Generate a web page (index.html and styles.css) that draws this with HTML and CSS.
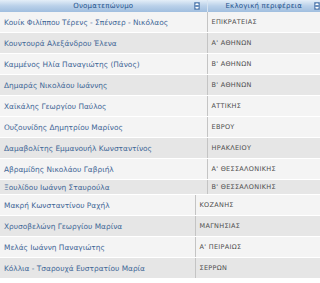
FILE: index.html
```html
<!DOCTYPE html>
<html>
<head>
<meta charset="utf-8">
<link rel="stylesheet" href="styles.css">
</head>
<body>
<table class="grid grid-a">
  <colgroup><col class="c1a"><col></colgroup>
  <thead>
    <tr>
      <th><span class="hd">Ονοματεπώνυμο</span><span class="sort"></span></th>
      <th><span class="hd">Εκλογική περιφέρεια</span><span class="sort"></span></th>
    </tr>
  </thead>
  <tbody>
    <tr class="odd"><td class="nm">Κουίκ Φιλίππου Τέρενς - Σπένσερ - Νικόλαος</td><td class="rg">ΕΠΙΚΡΑΤΕΙΑΣ</td></tr>
    <tr class="even"><td class="nm">Κουντουρά Αλεξάνδρου Έλενα</td><td class="rg">Α' ΑΘΗΝΩΝ</td></tr>
    <tr class="odd"><td class="nm">Καμμένος Ηλία Παναγιώτης (Πάνος)</td><td class="rg">Β' ΑΘΗΝΩΝ</td></tr>
    <tr class="even"><td class="nm">Δημαράς Νικολάου Ιωάννης</td><td class="rg">Β' ΑΘΗΝΩΝ</td></tr>
    <tr class="odd"><td class="nm">Χαϊκάλης Γεωργίου Παύλος</td><td class="rg">ΑΤΤΙΚΗΣ</td></tr>
    <tr class="odd"><td class="nm">Ουζουνίδης Δημητρίου Μαρίνος</td><td class="rg">ΕΒΡΟΥ</td></tr>
    <tr class="even"><td class="nm">Δαμαβολίτης Εμμανουήλ Κωνσταντίνος</td><td class="rg">ΗΡΑΚΛΕΙΟΥ</td></tr>
    <tr class="odd"><td class="nm">Αβραμίδης Νικολάου Γαβριήλ</td><td class="rg">Α' ΘΕΣΣΑΛΟΝΙΚΗΣ</td></tr>
    <tr class="even short"><td class="nm">Ξουλίδου Ιωάννη Σταυρούλα</td><td class="rg">Β' ΘΕΣΣΑΛΟΝΙΚΗΣ</td></tr>
  </tbody>
</table>
<table class="grid grid-b">
  <colgroup><col class="c1b"><col></colgroup>
  <tbody>
    <tr class="odd"><td class="nm">Μακρή Κωνσταντίνου Ραχήλ</td><td class="rg">ΚΟΖΑΝΗΣ</td></tr>
    <tr class="even"><td class="nm">Χρυσοβελώνη Γεωργίου Μαρίνα</td><td class="rg">ΜΑΓΝΗΣΙΑΣ</td></tr>
    <tr class="odd"><td class="nm">Μελάς Ιωάννη Παναγιώτης</td><td class="rg">Α' ΠΕΙΡΑΙΩΣ</td></tr>
    <tr class="even"><td class="nm">Κόλλια - Τσαρουχά Ευστρατίου Μαρία</td><td class="rg">ΣΕΡΡΩΝ</td></tr>
  </tbody>
</table>
</body>
</html>
```

FILE: styles.css
```css
html, body {
  margin: 0;
  padding: 0;
  background: #ffffff;
}
body {
  width: 320px;
  height: 283px;
  overflow: hidden;
  font-family: "DejaVu Sans", Verdana, sans-serif;
  font-size: 7.4px;
}
.grid {
  width: 320px;
  border-collapse: collapse;
  table-layout: fixed;
}
.c1a { width: 207px; }
.c1b { width: 195px; }
th {
  height: 12px;
  padding: 0;
  position: relative;
  font-weight: normal;
  color: #24538e;
  background: linear-gradient(#e4eef8, #b9d0e9 50%, #a0bedf);
  border-right: 1px solid #d6e3f1;
  text-align: center;
  line-height: 12px;
  font-size: 7px;
}
th:last-child { border-right: none; }
.hd { letter-spacing: 0.2px; }
.sort {
  position: absolute;
  right: 7px;
  top: 2px;
  width: 6px;
  height: 8px;
  border-radius: 1px;
  background: #6b8fbb;
}
th:last-child .sort { right: 0; }
.sort::before, .sort::after {
  content: "";
  position: absolute;
  left: 1px;
  border-left: 2px solid transparent;
  border-right: 2px solid transparent;
}
.sort::before { top: 1px; border-bottom: 2px solid #fff; }
.sort::after { bottom: 1px; border-top: 2px solid #fff; }
td {
  height: 20px;
  padding: 0 0 0 4px;
  white-space: nowrap;
  overflow: hidden;
  border-bottom: 1px solid #ffffff;
}
td.rg {
  padding-left: 4px;
  color: #4d4d4d;
  border-left: 1px solid #c4c4c4;
  letter-spacing: 0.3px;
  font-size: 6.5px;
}
td.nm { color: #3f6696; }
tr.odd td { background: #f4f4f4; }
tr.even td { background: #e6e6e6; }
tr.short td {
  height: 13px;
  padding-top: 1px;
  vertical-align: top;
  line-height: 13px;
}
tr.short td.rg { padding-top: 1px; }
```
